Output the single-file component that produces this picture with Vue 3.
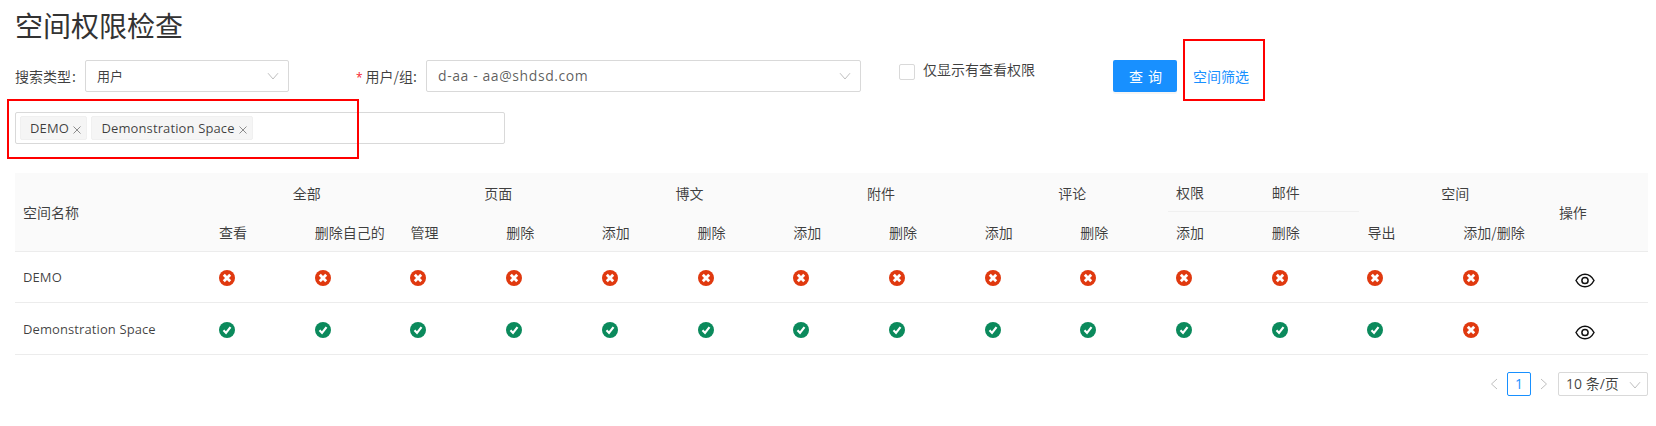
<script setup>
const groups = [
  { label: '全部', span: 2 }, { label: '页面', span: 2 }, { label: '博文', span: 2 }, { label: '附件', span: 2 },
  { label: '评论', span: 2 }, { label: '权限', span: 1, line: true }, { label: '邮件', span: 1, line: true }, { label: '空间', span: 2 }
]
const subs = ['查看', '删除自己的', '管理', '删除', '添加', '删除', '添加', '删除', '添加', '删除', '添加', '删除', '导出', '添加/删除']
const rows = [
  { name: 'DEMO', perms: Array(14).fill(false) },
  { name: 'Demonstration Space', perms: [...Array(13).fill(true), false] }
]
</script>

<template>
  <div class="page">
    <h1 class="title">空间权限检查</h1>

    <div class="form-row">
      <label class="label">搜索类型<em>:</em></label>
      <div class="select type-select"><span>用户</span>
        <svg class="arrow" viewBox="0 0 12 8"><path d="M1 1.2 6 7l5-5.8" /></svg>
      </div>
      <label class="label user-label"><i>*</i>用户/组:</label>
      <div class="select user-select"><span>d-aa - aa@shdsd.com</span>
        <svg class="arrow" viewBox="0 0 12 8"><path d="M1 1.2 6 7l5-5.8" /></svg>
      </div>
      <div class="check"><span class="box"></span><span>仅显示有查看权限</span></div>
      <button class="btn">查 询</button>
      <a class="link">空间筛选</a>
    </div>

    <div class="tag-box">
      <span class="tag">DEMO <svg class="x" viewBox="0 0 8 8"><path d="M.5.5l7 7M7.500.5l-7 7" /></svg></span>
      <span class="tag">Demonstration Space <svg class="x" viewBox="0 0 8 8"><path d="M.5.5l7 7M7.500.5l-7 7" /></svg></span>
    </div>

    <table class="grid">
      <colgroup>
        <col class="c-name" />
        <col v-for="(s, i) in subs" :key="i" class="c-perm" />
        <col class="c-op" />
      </colgroup>
      <thead>
        <tr class="head-top">
          <th rowspan="2">空间名称</th>
          <th v-for="g in groups" :key="g.label" :colspan="g.span" :class="g.line ? 'lined' : 'centered'">{{ g.label }}</th>
          <th rowspan="2">操作</th>
        </tr>
        <tr class="head-sub">
          <th v-for="(s, i) in subs" :key="i">{{ s }}</th>
        </tr>
      </thead>
      <tbody>
        <tr v-for="r in rows" :key="r.name">
          <td class="name">{{ r.name }}</td>
          <td v-for="(p, i) in r.perms" :key="i" class="perm">
            <svg v-if="p" class="state" viewBox="0 0 16 16">
              <circle cx="8" cy="8" r="8" fill="#0b8a5c" />
              <path d="M4.500 8.300 7 10.900l4.500-5.800" fill="none" stroke="#fff" stroke-width="2.200" />
            </svg>
            <svg v-else class="state" viewBox="0 0 16 16">
              <circle cx="8" cy="8" r="8" fill="#e0390f" />
              <path d="M4.800 4.800l6.400 6.400M11.200 4.800l-6.400 6.400" fill="none" stroke="#fff" stroke-width="2.800" />
            </svg>
          </td>
          <td class="op">
            <svg class="eye" viewBox="0 0 20 15">
              <path d="M1 7.500C3.200 3.400 6.200 1.200 10 1.200s6.800 2.200 9 6.300c-2.200 4.100-5.200 6.300-9 6.300s-6.800-2.200-9-6.300Z" fill="none" stroke="#111" stroke-width="1.500" />
              <circle cx="10" cy="7.500" r="3.100" fill="none" stroke="#111" stroke-width="1.500" />
            </svg>
          </td>
        </tr>
      </tbody>
    </table>

    <div class="pager">
      <svg class="chev" viewBox="0 0 8 12"><path d="M7 1 1.500 6 7 11" /></svg>
      <span class="current">1</span>
      <svg class="chev" viewBox="0 0 8 12"><path d="M1 1l5.500 5L1 11" /></svg>
      <div class="size">10 条/页
        <svg class="arrow small" viewBox="0 0 12 8"><path d="M1 1.200 6 7l5-5.800" /></svg>
      </div>
    </div>

    <div class="mark mark-tags"></div>
    <div class="mark mark-link"></div>
  </div>
</template>

<style>
html, body { margin: 0; background: #fff; }
</style>

<style scoped>
.page {
  position: relative;
  height: 426px;
  box-sizing: border-box;
  padding: 0 8px 0 15px;
  overflow: hidden;
  font-family: "Open Sans", "Noto Sans CJK SC", sans-serif;
  font-size: 13px;
  color: rgba(0, 0, 0, .75);
}
.title {
  margin: 0;
  height: 60px;
  padding-top: 6px;
  box-sizing: border-box;
  font-size: 28px;
  line-height: 38px;
  font-weight: 400;
  color: #333;
  font-family: "Noto Sans CJK SC", sans-serif;
}
.form-row { display: flex; align-items: flex-start; height: 32px; }
.label { width: 70px; line-height: 32px; font-size: 14px; font-family: "Noto Sans CJK SC", sans-serif; flex: none; }
.label em { font-style: normal; margin-left: 1px; }
.user-label { width: 70px; margin-left: 67px; }
.user-label i { color: #f5222d; font-style: normal; font-size: 12px; font-family: "Open Sans", sans-serif; margin-right: 3px; }
.select {
  position: relative;
  box-sizing: border-box;
  height: 32px;
  line-height: 30px;
  padding-left: 11px;
  border: 1px solid #d9d9d9;
  border-radius: 2px;
  flex: none;
}
.type-select { width: 204px; font-family: "Noto Sans CJK SC", sans-serif; }
.user-select { width: 435px; font-size: 14px; letter-spacing: .58px; color: rgba(0, 0, 0, .65); }
.arrow { position: absolute; right: 9px; top: 11px; width: 12px; height: 8px; fill: none; stroke: #bfbfbf; stroke-width: 1; }
.check { display: flex; align-items: center; margin-left: 38px; height: 20px; font-size: 14px; line-height: 20px; font-family: "Noto Sans CJK SC", sans-serif; flex: none; width: 214px; }
.box { width: 16px; height: 16px; box-sizing: border-box; border: 1px solid #d9d9d9; border-radius: 2px; margin-right: 8px; margin-top: 4px; }
.check span:last-child { margin-top: -2px; }
.btn {
  width: 64px;
  height: 32px;
  flex: none;
  border: 0;
  border-radius: 2px;
  background: #1890ff;
  color: #fff;
  font: 14px "Noto Sans CJK SC", sans-serif;
  letter-spacing: 1px;
  box-shadow: 0 2px 0 rgba(0, 0, 0, .04);
  padding: 0 0 0 2px;
}
.link { margin-left: 16px; line-height: 32px; color: #1890ff; font-size: 14px; font-family: "Noto Sans CJK SC", sans-serif; }

.tag-box {
  box-sizing: border-box;
  width: 490px;
  height: 32px;
  margin-top: 20px;
  border: 1px solid #d9d9d9;
  border-radius: 2px;
  padding: 3px 4px;
  display: flex;
  gap: 4px;
}
.tag {
  box-sizing: border-box;
  height: 24px;
  line-height: 22px;
  padding: 0 5px 0 9px;
  background: #f5f5f5;
  border: 1px solid #f0f0f0;
  border-radius: 2px;
  white-space: nowrap;
  letter-spacing: .12px;
}
.x { width: 8px; height: 8px; margin-left: 1px; fill: none; stroke: #8c8c8c; stroke-width: 1; vertical-align: -1px; }

.grid {
  table-layout: fixed;
  border-collapse: separate;
  border-spacing: 0;
  width: 1633px;
  margin-top: 29px;
}
.c-name { width: 196px; }
.c-perm { width: 95.7px; }
.c-op { width: 97px; }
th {
  box-sizing: border-box;
  padding: 0 8px;
  background: #fafafa;
  font-weight: 400;
  font-size: 14px;
  text-align: left;
  font-family: "Noto Sans CJK SC", sans-serif;
  white-space: nowrap;
}
thead tr:first-child th[rowspan] { border-bottom: 1px solid #ececec; }
.head-top th { height: 39px; }
.head-sub th { height: 40px; border-bottom: 1px solid #ececec; }
th.centered { text-align: center; }
th.lined { border-bottom: 1px solid #f0f0f0; }
td {
  box-sizing: border-box;
  height: 52px;
  padding: 0 8px;
  border-bottom: 1px solid #ececec;
}
tbody tr:first-child td { height: 51px; }
.name { letter-spacing: .1px; }
tbody tr:first-child .name { padding-bottom: 1px; }
.perm { line-height: 0; }
.state { width: 16px; height: 16px; display: block; margin-top: 2px; }
.op { padding-left: 24px; }
.eye { width: 20px; height: 15px; display: block; margin-top: 8px; }
tbody tr:first-child .eye { margin-top: 7px; }

.pager { display: flex; align-items: center; justify-content: flex-end; margin-top: 17px; height: 24px; }
.chev { width: 8px; height: 12px; fill: none; stroke: #bfbfbf; stroke-width: 1; }
.current {
  box-sizing: border-box;
  width: 24px;
  height: 24px;
  margin: 0 9px;
  border: 1px solid #1890ff;
  border-radius: 2px;
  color: #1890ff;
  text-align: center;
  line-height: 22px;
  font-size: 14px;
}
.size {
  position: relative;
  box-sizing: border-box;
  width: 90px;
  height: 24px;
  margin-left: 10px;
  padding-left: 7px;
  line-height: 22px;
  font-size: 14px;
  border: 1px solid #d9d9d9;
  border-radius: 2px;
  font-family: "Open Sans", "Noto Sans CJK SC", sans-serif;
}
.arrow.small { top: 8px; right: 6px; }

.mark { position: absolute; box-sizing: border-box; border: 2px solid #f00; pointer-events: none; }
.mark-tags { left: 7px; top: 99px; width: 352px; height: 60px; }
.mark-link { left: 1183px; top: 39px; width: 82px; height: 62px; }
</style>
